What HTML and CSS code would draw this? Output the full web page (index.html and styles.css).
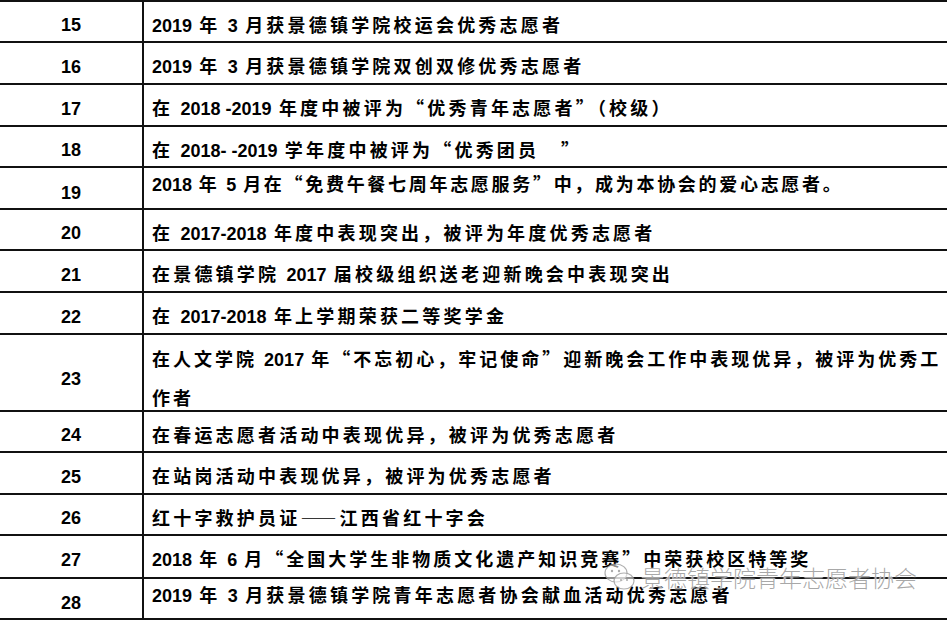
FILE: index.html
```html
<!DOCTYPE html>
<html lang="zh">
<head>
<meta charset="utf-8">
<link rel="stylesheet" href="styles.css">
</head>
<body>
<div class="sheet">
  <div class="row h41"><div class="num">15</div><div class="txt"><span class="d">2019</span> 年 <span class="d">3</span> 月获景德镇学院校运会优秀志愿者</div></div>
  <div class="row h42"><div class="num">16</div><div class="txt"><span class="d">2019</span> 年 <span class="d">3</span> 月获景德镇学院双创双修优秀志愿者</div></div>
  <div class="row h42"><div class="num">17</div><div class="txt">在 <span class="d">2018 -2019</span> 年度中被评为“优秀青年志愿者”（校级）</div></div>
  <div class="row h41"><div class="num">18</div><div class="txt">在 <span class="d">2018- -2019</span> 学年度中被评为“优秀团员 &nbsp; ”</div></div>
  <div class="row h42 top"><div class="num">19</div><div class="txt tight"><span class="d">2018</span> 年 <span class="d">5</span> 月在“免费午餐七周年志愿服务”中，成为本协会的爱心志愿者。</div></div>
  <div class="row h41"><div class="num">20</div><div class="txt">在 <span class="d">2017-2018</span> 年度中表现突出，被评为年度优秀志愿者</div></div>
  <div class="row h42"><div class="num">21</div><div class="txt">在景德镇学院 <span class="d">2017</span> 届校级组织送老迎新晚会中表现突出</div></div>
  <div class="row h42"><div class="num">22</div><div class="txt">在 <span class="d">2017-2018</span> 年上学期荣获二等奖学金</div></div>
  <div class="row h77 two"><div class="num">23</div><div class="txt snug">在人文学院 <span class="d">2017</span> 年“不忘初心，牢记使命”迎新晚会工作中表现优异，被评为优秀工<br>作者</div></div>
  <div class="row h41"><div class="num">24</div><div class="txt">在春运志愿者活动中表现优异，被评为优秀志愿者</div></div>
  <div class="row h42"><div class="num">25</div><div class="txt">在站岗活动中表现优异，被评为优秀志愿者</div></div>
  <div class="row h41"><div class="num">26</div><div class="txt">红十字救护员证——江西省红十字会</div></div>
  <div class="row h43"><div class="num">27</div><div class="txt snug"><span class="d">2018</span> 年 <span class="d">6</span> 月“全国大学生非物质文化遗产知识竞赛”中荣获校区特等奖</div></div>
  <div class="row h41 top last"><div class="num">28</div><div class="txt"><span class="d">2019</span> 年 <span class="d">3</span> 月获景德镇学院青年志愿者协会献血活动优秀志愿者</div></div>

  <div class="watermark">
    <svg class="wm-icon" width="34" height="34" viewBox="0 0 34 34">
      <g fill="rgba(255,255,255,0.55)" stroke="rgba(150,150,150,0.75)" stroke-width="1.2">
        <ellipse cx="13" cy="13" rx="11" ry="9"/>
        <ellipse cx="21" cy="21" rx="10" ry="8"/>
      </g>
      <g fill="rgba(150,150,150,0.8)">
        <circle cx="9" cy="11" r="1.2"/><circle cx="16" cy="11" r="1.2"/>
        <circle cx="18" cy="20" r="1"/><circle cx="24" cy="20" r="1"/>
      </g>
    </svg>
    <span class="wm-text">景德镇学院青年志愿者协会</span>
  </div>
</div>
</body>
</html>
```

FILE: styles.css
```css
html, body {
  margin: 0;
  padding: 0;
  background: #ffffff;
}

.sheet {
  position: relative;
  width: 947px;
  height: 620px;
  overflow: hidden;
  font-family: "Noto Sans CJK SC", "Liberation Sans", sans-serif;
  color: #000;
}

.row {
  display: grid;
  grid-template-columns: 144px 1fr;
  border-top: 2px solid #111;
  box-sizing: border-box;
}

.row.last {
  border-bottom: 2px solid #111;
}

.h41 { height: 41px; }
.h42 { height: 42px; }
.h43 { height: 43px; }
.h77 { height: 77px; }
.row.last.h41 { height: 43px; }

.num {
  border-right: 2px solid #111;
  display: flex;
  align-items: center;
  justify-content: center;
  padding-top: 8px;
  font-family: "Liberation Sans", Arial, sans-serif;
  font-weight: 700;
  font-size: 18px;
}

.txt {
  display: block;
  padding: 10px 0 0 8px;
  font-size: 18px;
  font-weight: 700;
  letter-spacing: 3.2px;
  line-height: 24px;
  white-space: nowrap;
}

.txt.tight { letter-spacing: 2.7px; }
.txt.snug { letter-spacing: 3px; }

.row.top .num { padding-top: 10px; }
.row.top .txt {
  padding-top: 3px;
}

.row.two .txt {
  line-height: 37px;
  padding-top: 5px;
}

.d {
  font-family: "Liberation Sans", Arial, sans-serif;
  font-size: 18px;
  letter-spacing: 0;
}

.watermark {
  position: absolute;
  left: 603px;
  top: 560px;
  display: flex;
  align-items: center;
  gap: 4px;
}

.wm-text {
  font-family: "Noto Sans CJK SC", sans-serif;
  font-size: 23px;
  font-weight: 300;
  color: rgba(140, 140, 140, 0.75);
  letter-spacing: 0;
  text-shadow: 0 0 1px #fff, 0 0 2px #fff;
}
```
